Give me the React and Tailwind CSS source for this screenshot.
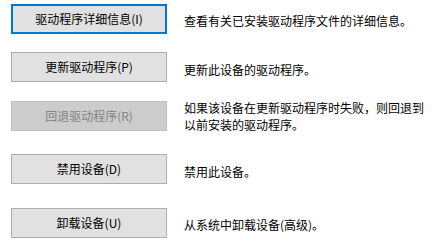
const ROWS = [
  { label: '驱动程序详细信息(I)', desc: ['查看有关已安装驱动程序文件的详细信息。'], focused: true, row: 'mt-[4px]', btn: '', text: 'pt-[8px]' },
  { label: '更新驱动程序(P)', desc: ['更新此设备的驱动程序。'], row: 'mt-[18px]', btn: '', text: 'pt-[9px]' },
  { label: '回退驱动程序(R)', desc: ['如果该设备在更新驱动程序时失败，则回退到', '以前安装的驱动程序。'], disabled: true, row: 'mt-[17px]', btn: 'mt-[2px]', text: 'pt-0' },
  { label: '禁用设备(D)', desc: ['禁用此设备。'], row: 'mt-[21px]', btn: '', text: 'pt-[9px]' },
  { label: '卸载设备(U)', desc: ['从系统中卸载设备(高级)。'], row: 'mt-[24px]', btn: '', text: 'pt-[8px]' },
]

function DriverButton({ label, focused, disabled, extra }) {
  let look = 'bg-[#e1e1e1] border border-[#adadad] text-black'
  if (focused) look = 'bg-[#e1e1e1] border-2 border-[#0078d7] text-black'
  if (disabled) look = 'bg-[#cccccc] border border-[#bfbfbf] text-[#838383]'
  return (
    <button
      disabled={disabled}
      className={`w-[156px] h-[30px] shrink-0 flex items-center justify-center text-[12px] leading-none ${look} ${extra}`}
    >
      {label}
    </button>
  )
}

export default function App() {
  return (
    <div
      className="w-[446px] h-[248px] bg-white overflow-hidden pl-[11px] flex flex-col"
      style={{ fontFamily: '"Noto Sans CJK SC", "Noto Sans", sans-serif' }}
    >
      {ROWS.map(r => (
        <div key={r.label} className={`flex items-start ${r.row}`}>
          <DriverButton label={r.label} focused={r.focused} disabled={r.disabled} extra={r.btn} />
          <div className={`ml-[17px] text-[12px] leading-[17px] text-black whitespace-nowrap ${r.text}`}>
            {r.desc.map(line => (
              <div key={line}>{line}</div>
            ))}
          </div>
        </div>
      ))}
    </div>
  )
}
